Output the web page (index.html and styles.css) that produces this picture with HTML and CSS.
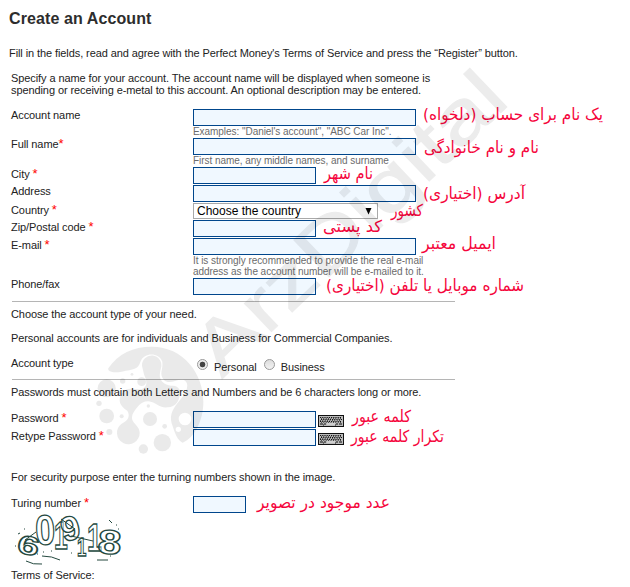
FILE: index.html
```html
<!DOCTYPE html>
<html lang="en">
<head>
<meta charset="utf-8">
<title>Create an Account</title>
<link rel="stylesheet" href="styles.css">
</head>
<body>
<svg class="defs" width="0" height="0">
  <defs>
    <g id="kbd">
      <rect width="26" height="12" fill="#111"/>
      <rect x="1" y="1" width="24" height="10" fill="#bbb"/>
      <path d="M2 2.500h22M3 4.500h21M2 6.500h22" stroke="#111" stroke-width="1" stroke-dasharray="1.200 1"/>
      <path d="M3 3.500h21M2 5.500h21M3 7.500h20" stroke="#333" stroke-width="1" stroke-dasharray=".8 1.600"/>
      <path d="M2 9h3M6 9h2M18 9h2M21 9h3M5 10h1M17 10h1" stroke="#111" stroke-width="1"/>
      <path d="M9 9h8" stroke="#ddd" stroke-width="1.200"/>
    </g>
  </defs>
</svg>
<main class="page">
  <h1>Create an Account</h1>
  <p class="lead">Fill in the fields, read and agree with the Perfect Money's Terms of Service and press the “Register” button.</p>
  <form class="form">
    <p class="intro">Specify a name for your account. The account name will be displayed when someone is<br>spending or receiving e-metal to this account. An optional description may be entered.</p>

    <div class="row tall">
      <label>Account name</label>
      <div class="cell"><div class="line"><input class="wide" type="text"><svg class="note n1" width="180" height="1"><text x="0" y="11" textLength="180" lengthAdjust="spacingAndGlyphs">یک نام برای حساب (دلخواه)</text></svg></div><small>Examples: "Daniel's account", "ABC Car Inc".</small></div>
    </div>
    <div class="row tall">
      <label>Full name<b>*</b></label>
      <div class="cell"><div class="line"><input class="wide" type="text"><svg class="note n2" width="115" height="1"><text x="0" y="15" textLength="115" lengthAdjust="spacingAndGlyphs">نام و نام خانوادگی</text></svg></div><small>First name, any middle names, and surname</small></div>
    </div>
    <div class="row low">
      <label>City <b>*</b></label>
      <div class="cell"><div class="line"><input type="text"><svg class="note n3" width="49" height="1"><text x="0" y="12" textLength="49" lengthAdjust="spacingAndGlyphs">نام شهر</text></svg></div></div>
    </div>
    <div class="row">
      <label>Address</label>
      <div class="cell"><div class="line"><input class="wide" type="text"><svg class="note n4" width="102" height="1"><text x="0" y="14" textLength="102" lengthAdjust="spacingAndGlyphs">آدرس (اختیاری)</text></svg></div></div>
    </div>
    <div class="row short low">
      <label>Country <b>*</b></label>
      <div class="cell"><div class="line"><div class="select"><span>Choose the country</span><svg width="7" height="8"><path d="M0.500 1h6L3.500 7.500z"/></svg></div><svg class="note n5" width="32" height="1"><text x="0" y="13" textLength="32" lengthAdjust="spacingAndGlyphs">کشور</text></svg></div></div>
    </div>
    <div class="row low">
      <label>Zip/Postal code <b>*</b></label>
      <div class="cell"><div class="line"><input type="text"><svg class="note n6" width="59" height="1"><text x="0" y="12" textLength="59" lengthAdjust="spacingAndGlyphs">کد پستی</text></svg></div></div>
    </div>
    <div class="row mail low">
      <label>E-mail <b>*</b></label>
      <div class="cell"><div class="line"><input class="wide" type="text"><svg class="note n7" width="74" height="1"><text x="0" y="11" textLength="74" lengthAdjust="spacingAndGlyphs">ایمیل معتبر</text></svg></div><small>It is strongly recommended to provide the real e-mail<br>address as the account number will be e-mailed to it.</small></div>
    </div>
    <div class="row phone">
      <label>Phone/fax</label>
      <div class="cell"><div class="line"><input type="text"><svg class="note n8" width="198" height="1"><text x="0" y="13" textLength="198" lengthAdjust="spacingAndGlyphs">شماره موبایل یا تلفن (اختیاری)</text></svg></div></div>
    </div>

    <hr>
    <p class="choose">Choose the account type of your need.</p>
    <p class="kinds">Personal accounts are for individuals and Business for Commercial Companies.</p>
    <div class="row type">
      <label>Account type</label>
      <div class="cell radios"><i class="radio on"></i><span>Personal</span><i class="radio"></i><span>Business</span></div>
    </div>
    <hr>
    <p class="rule">Passwords must contain both Letters and Numbers and be 6 characters long or more.</p>

    <div class="row low">
      <label>Password <b>*</b></label>
      <div class="cell"><div class="line"><input type="password"><svg class="kbd" width="26" height="12"><use href="#kbd"/></svg><svg class="note n9" width="59" height="1"><text x="0" y="11" textLength="59" lengthAdjust="spacingAndGlyphs">کلمه عبور</text></svg></div></div>
    </div>
    <div class="row low">
      <label>Retype Password <b>*</b></label>
      <div class="cell"><div class="line"><input type="password"><svg class="kbd" width="26" height="12"><use href="#kbd"/></svg><svg class="note n10" width="93" height="1"><text x="0" y="13" textLength="93" lengthAdjust="spacingAndGlyphs">تکرار کلمه عبور</text></svg></div></div>
    </div>

    <p class="secure">For security purpose enter the turning numbers shown in the image.</p>
    <div class="row turing">
      <label>Turing number <b>*</b></label>
      <div class="cell"><div class="line"><input class="code" type="text"><svg class="note n11" width="133" height="1"><text x="0" y="12" textLength="133" lengthAdjust="spacingAndGlyphs">عدد موجود در تصویر</text></svg></div></div>
    </div>
    <svg class="captcha" width="125" height="54" viewBox="0 0 125 54">
      <g class="digits">
        <text transform="translate(5 38) rotate(12) scale(1.500 1)" font-size="26">6</text>
        <text transform="translate(25 31) rotate(-3) scale(.85 1)" font-size="42">0</text>
        <text transform="translate(43 35) scale(.65 1)" font-size="38">1</text>
        <text transform="translate(53 28) rotate(-14) scale(1 1)" font-size="34">9</text>
        <text transform="translate(66 42) scale(.65 1)" font-size="26">1</text>
        <text transform="translate(76 37) scale(.7 1)" font-size="38">1</text>
        <text transform="translate(86 39) rotate(4) scale(1.250 1)" font-size="34">8</text>
      </g>
      <path d="M15 47q7 4 16 3M31 42q10 0 18 4M86 46h11M50 5l14 10M98 6l3 3M9 19l-2 1M14 26l11-8M60 22l22 5" fill="none" stroke="#24493f" stroke-width="1"/>
      <path d="M4 32h1M105 11h1M107 15h1M40 37h1M32 38h1M60 39h1M13 15h1M99 42h1M26 40h1" stroke="#24493f"/>
    </svg>
    <p class="terms">Terms of Service:</p>
  </form>
</main>

<svg class="watermark" width="630" height="587" viewBox="0 0 630 587">
  <g class="brand"><text transform="translate(222 379) rotate(-43.700)" textLength="400" lengthAdjust="spacingAndGlyphs">ArzDigital</text></g>
  <g class="mark" transform="translate(80 320) scale(.33333)">
    <path fill-rule="evenodd" d="M85 145C115 100 160 80 215 80C310 80 370 160 370 245C370 300 345 352 308 368C292 362 285 340 275 310C268 282 280 265 300 240C322 215 330 190 312 180C290 174 270 196 252 180C236 160 250 150 247 125C237 97 192 97 182 124C174 150 160 148 125 155C100 160 82 155 85 145ZM334 297a19 19 0 1 0-38 0a19 19 0 1 0 38 0ZM303 328a8 8 0 1 0-16 0a8 8 0 1 0 16 0Z"/>
    <path d="M186 137a29 29 0 1 1 57 6C238 165 236 176 252 190C270 204 290 190 299 210C302 240 288 262 262 262C240 264 228 248 212 245C185 238 170 262 158 282C148 310 178 312 179 338A34 34 0 1 1 125 311C148 300 150 285 142 272C120 260 112 240 126 220C144 198 164 210 184 208C208 200 198 178 192 163Z"/>
    <circle cx="80" cy="205" r="27"/><circle cx="57" cy="250" r="8"/><circle cx="80" cy="288" r="22"/><circle cx="88" cy="336" r="9"/><circle cx="190" cy="387" r="14"/><circle cx="247" cy="368" r="26"/><circle cx="210" cy="297" r="21"/><circle cx="125" cy="289" r="6"/><circle cx="254" cy="319" r="7"/><circle cx="205" cy="258" r="5"/><circle cx="128" cy="183" r="8"/><circle cx="185" cy="185" r="13"/><circle cx="156" cy="163" r="4"/>
  </g>
</svg>
</body>
</html>
```
FILE: styles.css
```css
* { box-sizing: border-box; }
body {
  margin: 0;
  width: 630px;
  height: 587px;
  overflow: hidden;
  position: relative;
  background: #fff;
  color: #222;
  font: 11px/12px "Liberation Sans", Arial, sans-serif;
  letter-spacing: -.09px;
}
.defs { display: block; }
.page { height: 587px; padding: 9px 0 0 9px; white-space: nowrap; overflow: hidden; }
h1 { margin: 0; font-size: 16px; line-height: 20px; letter-spacing: .1px; color: #2d2d2d; }
p { margin: 0; }
.lead { margin-top: 18px; }
.form { padding-left: 2px; }
.intro { margin: 13px 0 13px; }
.row { display: grid; grid-template-columns: 182px 1fr; height: 18px; }
.row.tall { height: 29px; }
.row.short { height: 17px; }
.row.mail { height: 40px; }
.row.phone { height: 23px; }
.row.type { height: 22px; }
.low label { padding-top: 1px; }
label b { color: #f00; font-weight: normal; font-size: 13px; line-height: 0; }
.line { display: flex; align-items: flex-start; height: 17px; }
input {
  width: 123px;
  height: 17px;
  margin: 0;
  padding: 0 2px;
  border: 1px solid #00468c;
  background: #f0f8ff;
}
input.wide { width: 223px; }
input.code { width: 53px; }
small { display: block; color: #6b6b6b; font-size: 10px; line-height: 11px; letter-spacing: -.05px; }
.select {
  display: flex;
  align-items: center;
  justify-content: space-between;
  width: 185px;
  height: 16px;
  padding: 0 5px 1px 3px;
  border: 1px solid #a9a9a9;
  background: #fff;
  color: #000;
  font-size: 12px;
  letter-spacing: 0;
}
hr { width: 443px; height: 1px; margin: 0 0 0 1px; border: 0; background: #b5b5b5; }
.choose { margin: 6px 0 12px; }
.kinds { margin-bottom: 13px; }
.radios { display: flex; align-items: center; padding-left: 4px; height: 15px; }
.radio {
  width: 11px;
  height: 11px;
  border: 1px solid #999;
  border-radius: 50%;
  background: linear-gradient(#ddd, #f2f2f2);
}
.radio.on { background: radial-gradient(circle, #444 0 2.5px, #eee 3.2px); }
.radios span { margin: 4px 7px 0 6px; }
.rule { margin: 6px 0 13px; }
.kbd { margin: 4px 0 0 2px; }
.secure { margin: 24px 0 13px; }
.turing label { padding-top: 1px; }
.captcha { display: block; overflow: visible; }
.digits text {
  font-family: "Liberation Sans", Arial, sans-serif;
  font-weight: bold;
  fill: #fff;
  fill-opacity: .4;
  stroke: #24493f;
  stroke-width: 1.3;
  letter-spacing: 0;
}
.terms { margin-top: 1px; }
.note { overflow: visible; margin-left: 7px; flex: none; }
.note text { font: 16.500px "DejaVu Sans", sans-serif; letter-spacing: 0; fill: #f5053c; }
.n2 { margin-left: 8px; }
.n3 { margin-left: 8px; }
.n5 { margin-left: 13px; }
.n7 { margin-left: 6px; }
.n8 { margin-left: 10px; }
.n9 { margin-left: 8px; }
.n11 { margin-left: 11px; }
.watermark { position: absolute; left: 0; top: 0; pointer-events: none; }
.brand { opacity: .07; }
.brand text { font: 74px "Liberation Sans", Arial, sans-serif; letter-spacing: 0; fill: #000; stroke: #000; stroke-width: 1; }
.mark { opacity: .08; }
```
